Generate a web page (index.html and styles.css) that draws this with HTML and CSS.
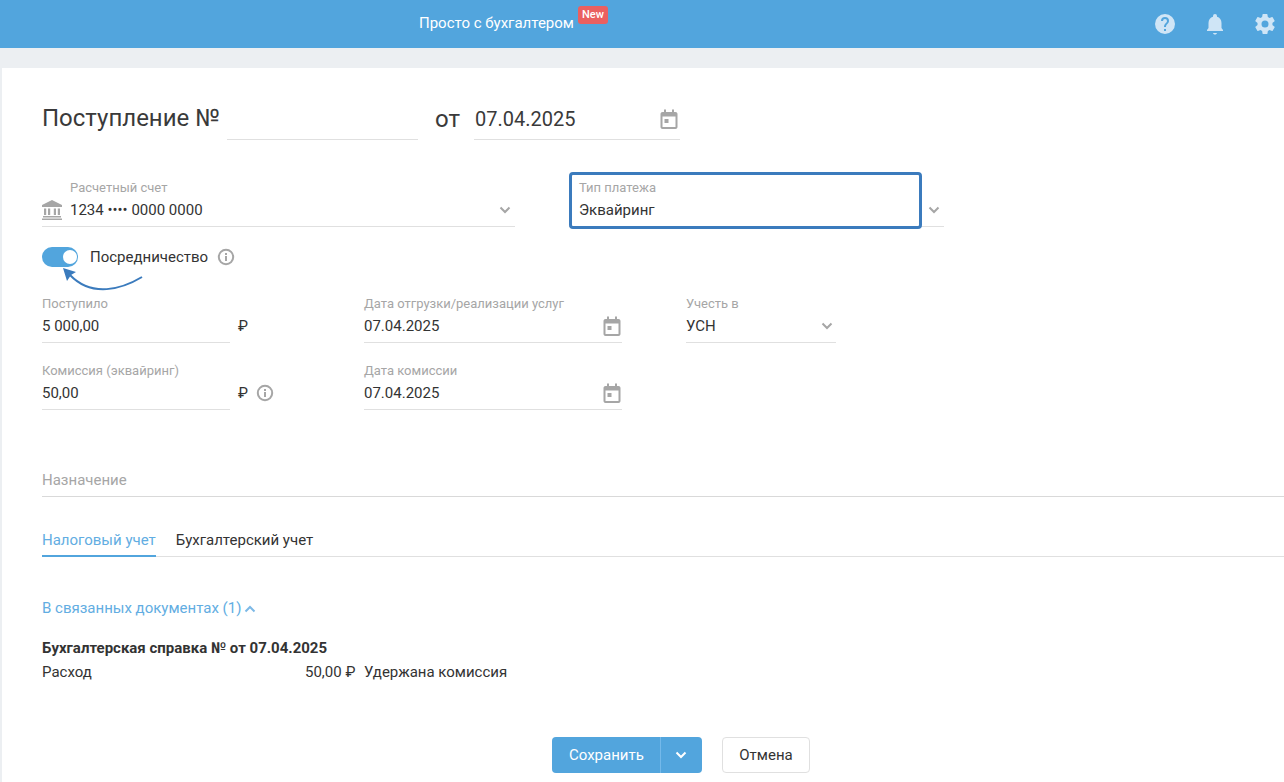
FILE: index.html
```html
<!DOCTYPE html>
<html lang="ru">
<head>
<meta charset="utf-8">
<title>Поступление</title>
<link rel="stylesheet" href="styles.css">
</head>
<body>
<header class="topbar">
  <div class="brand"><span>Просто с бухгалтером</span><span class="badge">New</span></div>
  <div class="top-icons">
    <svg width="24" height="24" viewBox="0 0 24 24"><path fill="#cfe5f6" fill-rule="evenodd" d="M12 2a10 10 0 1 0 0 20 10 10 0 0 0 0-20zm1 17h-2v-2h2zm2.07-7.75-.9.92C13.45 12.9 13 13.5 13 15h-2v-.5c0-1.1.45-2.1 1.17-2.83l1.24-1.26A2 2 0 0 0 14 9a2 2 0 0 0-4 0H8a4 4 0 0 1 8 0c0 .88-.36 1.68-.93 2.25z"/></svg>
    <svg width="24" height="24" viewBox="0 0 24 24"><path fill="#cfe5f6" d="M12 22.500c1.100 0 2-.7 2-1.500h-4c0 .8.9 1.500 2 1.500zM18.500 16v-5c0-3.100-1.700-5.600-4.500-6.300V4a2 2 0 0 0-4 0v.7C7.200 5.400 5.500 7.900 5.500 11v5L4 18v1h16v-1z"/></svg>
    <svg width="24" height="24" viewBox="0 0 24 24"><path fill="#cfe5f6" d="M19.400 13c.04-.32.100-.66.100-1s-.06-.68-.1-1l2.100-1.650a.5.500 0 0 0 .12-.64l-2-3.460a.5.500 0 0 0-.61-.22l-2.490 1a7.300 7.300 0 0 0-1.690-.98l-.38-2.650A.49.490 0 0 0 14 2h-4a.49.490 0 0 0-.49.420l-.38 2.650c-.61.25-1.170.59-1.690.98l-2.490-1a.5.500 0 0 0-.61.220l-2 3.460a.49.490 0 0 0 .12.640L4.570 11c-.04.320-.07.660-.07 1s.03.680.07 1l-2.110 1.650a.5.500 0 0 0-.12.640l2 3.460c.12.220.39.300.61.220l2.490-1c.52.4 1.080.73 1.690.98l.38 2.650c.03.240.24.420.49.420h4c.25 0 .46-.18.49-.42l.38-2.650c.61-.25 1.170-.58 1.690-.98l2.490 1c.22.080.49 0 .61-.22l2-3.460a.5.500 0 0 0-.12-.64zM12 15.500a3.500 3.500 0 1 1 0-7 3.500 3.500 0 0 1 0 7z"/></svg>
  </div>
</header>
<main class="sheet">
  <div class="title-row">
    <h1 class="title">Поступление №</h1>
    <div class="number-input"></div>
    <span class="from">от</span>
    <div class="title-date">
      <span>07.04.2025</span>
      <svg class="cal" width="24" height="24" viewBox="0 0 24 24"><use href="#cal"/></svg>
    </div>
  </div>

  <div class="account-row">
    <div class="account">
      <svg class="bank" width="20" height="20" viewBox="1 1 20 20"><path fill="#a6a6a6" d="M11 1 1 6v2h20V6zM3 9.500h2.200V16H3zM7 9.500h2.200V16H7zM12.800 9.500H15V16h-2.200zM16.800 9.500H19V16h-2.200zM2 17h18v1.500H2zM1 19.500h20V21H1z"/></svg>
      <div class="account-body">
        <label class="cap">Расчетный счет</label>
        <div class="val">1234 •••• 0000 0000</div>
      </div>
      <svg class="chev" width="12" height="8" viewBox="0 0 12 8"><path d="M1.500 1.500 6 6l4.500-4.500" fill="none" stroke="#a6a6a6" stroke-width="2"/></svg>
    </div>
    <div class="paytype">
      <div class="paybox">
        <label class="cap">Тип платежа</label>
        <div class="val">Эквайринг</div>
      </div>
      <svg class="chev" width="12" height="8" viewBox="0 0 12 8"><path d="M1.500 1.500 6 6l4.500-4.500" fill="none" stroke="#a6a6a6" stroke-width="2"/></svg>
    </div>
  </div>

  <div class="toggle-row">
    <span class="switch"><span class="knob"></span></span>
    <span class="toggle-label">Посредничество</span>
    <svg width="18" height="18" viewBox="0 0 18 18"><use href="#info"/></svg>
    <svg class="arrow" width="84" height="30" viewBox="0 0 84 30"><path d="M80 12C60 24 30 33 8 10" fill="none" stroke="#3b7bbd" stroke-width="2"/><path d="M1 3 14 7 9 10 5 16Z" fill="#3b7bbd"/></svg>
  </div>

  <div class="grid">
    <div class="field f-sum">
      <label class="cap">Поступило</label>
      <div class="val">5 000,00</div>
    </div>
    <div class="suffix">₽</div>
    <div class="field f-date">
      <label class="cap">Дата отгрузки/реализации услуг</label>
      <div class="val">07.04.2025</div>
      <svg class="cal" width="24" height="24" viewBox="0 0 24 24"><use href="#cal"/></svg>
    </div>
    <div class="field f-tax">
      <label class="cap">Учесть в</label>
      <div class="val">УСН</div>
      <svg class="chev" width="12" height="8" viewBox="0 0 12 8"><path d="M1.500 1.500 6 6l4.500-4.500" fill="none" stroke="#a6a6a6" stroke-width="2"/></svg>
    </div>
    <div class="field f-sum">
      <label class="cap">Комиссия (эквайринг)</label>
      <div class="val">50,00</div>
    </div>
    <div class="suffix">₽<svg width="18" height="18" viewBox="0 0 18 18"><use href="#info"/></svg></div>
    <div class="field f-date">
      <label class="cap">Дата комиссии</label>
      <div class="val">07.04.2025</div>
      <svg class="cal" width="24" height="24" viewBox="0 0 24 24"><use href="#cal"/></svg>
    </div>
  </div>

  <div class="purpose">Назначение</div>

  <nav class="tabs">
    <span class="tab active">Налоговый учет</span>
    <span class="tab">Бухгалтерский учет</span>
  </nav>

  <div class="linked">В связанных документах (1)
    <svg width="12" height="8" viewBox="0 0 12 8"><path d="M1.500 6.500 6 2l4.500 4.500" fill="none" stroke="#7db9e6" stroke-width="2"/></svg>
  </div>
  <div class="doc-title">Бухгалтерская справка № от 07.04.2025</div>
  <div class="doc-row">
    <span class="doc-type">Расход</span>
    <span class="doc-sum">50,00 ₽</span>
    <span>Удержана комиссия</span>
  </div>

  <div class="actions">
    <div class="save">
      <span class="save-main">Сохранить</span>
      <span class="save-more"><svg width="12" height="8" viewBox="0 0 12 8"><path d="M1.500 1.500 6 6l4.500-4.500" fill="none" stroke="#fff" stroke-width="2"/></svg></span>
    </div>
    <div class="cancel">Отмена</div>
  </div>
</main>
<svg class="defs" width="0" height="0">
  <defs>
    <symbol id="cal" viewBox="0 0 24 24"><path fill="#a6a6a6" fill-rule="evenodd" d="M7 2.500h2V5h6V2.500h2V5h1.500c1.100 0 2 .9 2 2v13c0 1.100-.9 2-2 2h-13c-1.100 0-2-.9-2-2V7c0-1.100.9-2 2-2H7zM5.500 9.500V20h13V9.500zM7.500 12h4v4h-4z"/></symbol>
    <symbol id="info" viewBox="0 0 18 18"><circle cx="9" cy="9" r="7.200" fill="none" stroke="#a6a6a6" stroke-width="2"/><path fill="#a6a6a6" d="M8 8h2v5H8zM8 5h2v2H8z"/></symbol>
  </defs>
</svg>
</body>
</html>
```
FILE: styles.css
```css
* { box-sizing: border-box; }
html, body { margin: 0; height: 100%; }
body {
  width: 1284px; height: 782px; overflow: hidden;
  background: #eceff2;
  font-family: Roboto, "Noto Sans", sans-serif;
  font-size: 15px; color: #333;
}
.topbar {
  height: 48px; background: #52a5dd; color: #fff;
  display: flex; justify-content: space-between; align-items: center;
  padding: 0 7px 0 419px;
}
.brand { display: flex; align-items: flex-start; font-size: 15px; height: 48px; padding-top: 14px; }
.badge {
  background: #ea6060; color: #fff; font-size: 11px; font-weight: 500;
  height: 18px; line-height: 17px; padding: 0 4px; border-radius: 3px;
  margin: -8px 0 0 4px;
}
.top-icons { display: flex; gap: 26px; align-items: center; }
.sheet {
  margin: 20px 0 0 2px; height: 714px; background: #fff;
  padding: 32px 0 0 40px; position: relative;
}
.title-row { display: flex; align-items: flex-start; height: 40px; color: #3a3a3a; }
.title { margin: 0; font-size: 24px; font-weight: 400; line-height: 36px; height: 36px; width: 185px; }
.number-input { width: 191px; height: 40px; border-bottom: 1px solid #e0e0e0; }
.from { font-size: 24px; line-height: 38px; margin-left: 17px; width: 39px; }
.title-date {
  width: 206px; height: 40px; border-bottom: 1px solid #e0e0e0;
  display: flex; justify-content: space-between; font-size: 20px; line-height: 38px;
  padding-left: 1px;
}
.title-date .cal { margin: 7px -1px 0 0; }
.cap { display: block; font-size: 13px; line-height: 14px; color: #a6a6a6; }
.val { font-size: 15px; line-height: 20px; color: #333; }
.account-row { display: flex; margin-top: 33px; height: 56px; align-items: flex-start; }
.account {
  width: 473px; height: 54px; border-bottom: 1px solid #e0e0e0;
  display: flex; align-items: flex-start; position: relative;
}
.bank { margin: 27px 8px 0 0; }
.account-body { padding-top: 8px; }
.account-body .val { margin-top: 5px; }
.account .chev { position: absolute; right: 4px; top: 33px; }
.paytype {
  margin-left: 54px; width: 375px; height: 54px; border-bottom: 1px solid #e0e0e0;
  position: relative;
}
.paybox {
  width: 353px; height: 57px; margin-top: -1px; background: #fff; border: 3px solid #3b7bbd; border-radius: 4px;
  padding: 6px 0 0 7px;
}
.paybox .val { margin-top: 5px; }
.paytype .chev { position: absolute; right: 4px; top: 33px; }
.toggle-row { display: flex; align-items: center; height: 20px; margin-top: 18px; position: relative; }
.switch {
  width: 36px; height: 20px; border-radius: 10px; background: #52a5dd;
  display: flex; align-items: center; justify-content: flex-end; padding-right: 1px;
}
.knob { width: 14px; height: 14px; border-radius: 50%; background: #fff; }
.toggle-label { margin: 0 9px 0 12px; font-size: 15px; }
.arrow { position: absolute; left: 20px; top: 18px; }
.grid {
  display: grid; grid-template-columns: 188px 134px 258px 64px 150px;
  grid-auto-rows: 47px; row-gap: 20px; margin-top: 29px;
}
.field { border-bottom: 1px solid #e0e0e0; position: relative; padding-top: 1px; }
.field .val { margin-top: 5px; }
.f-date { grid-column: 3; }
.f-tax { grid-column: 5; }
.f-date .cal { position: absolute; right: -2px; top: 18px; }
.f-tax .chev { position: absolute; right: 3px; top: 26px; }
.suffix { display: flex; align-items: center; gap: 8px; font-size: 15px; padding: 13px 0 0 8px; }
.purpose {
  margin-top: 61px; height: 26px; line-height: 18px; border-bottom: 1px solid #d9d9d9;
  font-size: 15px; color: #a6a6a6;
}
.tabs { display: flex; gap: 20px; height: 37px; margin-top: 23px; border-bottom: 1px solid #e0e0e0; }
.tab { height: 37px; line-height: 20px; padding-top: 10px; font-size: 15px; }
.tab.active { color: #62ade2; border-bottom: 2px solid #52a5dd; }
.linked { margin-top: 41px; font-size: 15px; line-height: 20px; color: #62ade2; }
.linked svg { margin-left: -1px; }
.doc-title { margin-top: 20px; font-weight: 700; font-size: 15px; line-height: 20px; }
.doc-row { display: flex; margin-top: 4px; font-size: 15px; line-height: 20px; }
.doc-type { width: 263px; }
.doc-sum { width: 59px; }
.actions { position: absolute; left: 550px; top: 669px; display: flex; gap: 20px; }
.save { display: flex; width: 150px; height: 36px; background: #52a5dd; border-radius: 4px; color: #fff; font-size: 15px; }
.save-main { width: 109px; line-height: 37px; padding-left: 17px; border-right: 1px solid #74b9ea; }
.save-more { flex: 1; display: flex; align-items: center; justify-content: center; padding-right: 1px; }
.cancel { width: 88px; height: 36px; border: 1px solid #e0e0e0; border-radius: 4px; line-height: 35px; text-align: center; font-size: 15px; }
.defs { position: absolute; }
```
